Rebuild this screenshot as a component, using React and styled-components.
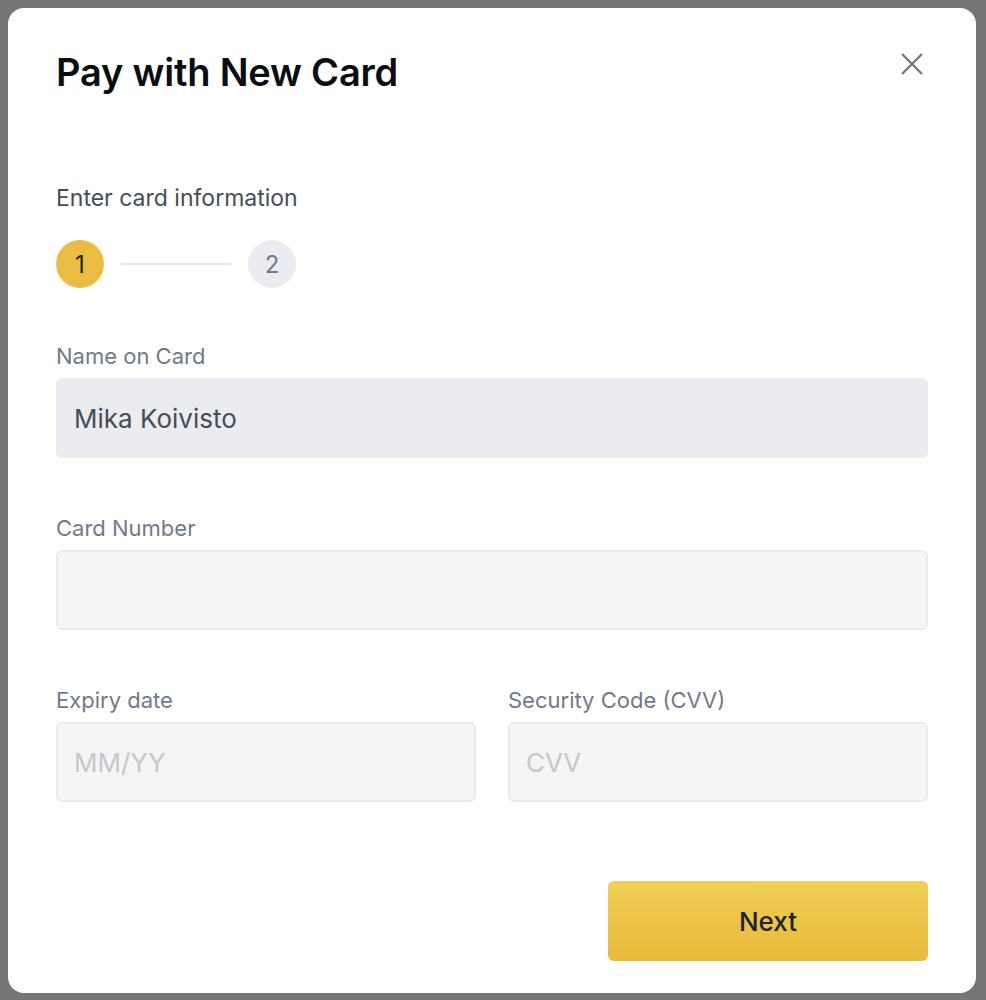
import styled, { createGlobalStyle } from "styled-components";

const GlobalStyle = createGlobalStyle`
	body {
		margin: 0;
		background: #767676;
		font-family: "Inter", "Roboto", sans-serif;
	}
`;

const Backdrop = styled.div`
	width: 986px;
	height: 1000px;
	padding: 8px 10px 7px 8px;
	box-sizing: border-box;
	background: #767676;
`;

const Modal = styled.div`
	height: 100%;
	background: #fff;
	border-radius: 16px;
	padding: 42px 48px 32px 48px;
	box-sizing: border-box;
	display: flex;
	flex-direction: column;
`;

const Header = styled.div`
	display: flex;
	justify-content: space-between;
	align-items: flex-start;
`;

const Title = styled.h1`
	margin: 0;
	font-size: 38px;
	line-height: 44px;
	font-weight: 600;
	color: #0b0e11;
	letter-spacing: -0.2px;
`;

const Close = styled.button`
	border: none;
	background: none;
	padding: 0;
	margin-top: 2px;
	margin-right: 4px;
	cursor: pointer;
	display: flex;
`;

const Subtitle = styled.div`
	margin-top: 90px;
	font-size: 23px;
	line-height: 28px;
	color: #474d57;
`;

const Steps = styled.div`
	margin-top: 28px;
	display: flex;
	align-items: center;
	gap: 17px;
`;

const Step = styled.div`
	width: 48px;
	height: 48px;
	border-radius: 50%;
	display: flex;
	align-items: center;
	justify-content: center;
	font-size: 24px;
	background: ${(p) => (p.$active ? "#ebbd42" : "#eaecef")};
	color: ${(p) => (p.$active ? "#1e2329" : "#707a8a")};
`;

const StepLine = styled.div`
	width: 110px;
	height: 2px;
	background: #e6e8ea;
`;

const Field = styled.div`
	display: flex;
	flex-direction: column;
	gap: 8px;
	margin-top: ${(p) => p.$top || "56px"};
`;

const Label = styled.div`
	font-size: 22px;
	line-height: 28px;
	color: #707a8a;
`;

const Input = styled.div`
	height: 80px;
	box-sizing: border-box;
	border-radius: 6px;
	padding: 0 16px;
	display: flex;
	align-items: center;
	font-size: 26px;
	background: ${(p) => (p.$filled ? "#eaecef" : "#f5f5f5")};
	border: 2px solid ${(p) => (p.$filled ? "#eaecef" : "#ebebeb")};
	color: ${(p) => (p.$filled ? "#474d57" : "#c4c7cc")};
`;

const Row = styled.div`
	display: grid;
	grid-template-columns: 420px 1fr;
	gap: 32px;
`;

const Footer = styled.div`
	margin-top: auto;
	display: flex;
	justify-content: flex-end;
`;

const NextButton = styled.button`
	width: 320px;
	height: 80px;
	border: none;
	border-radius: 6px;
	background: linear-gradient(180deg, #f0cf55 0%, #e9b93b 100%);
	font-family: inherit;
	font-size: 26px;
	font-weight: 500;
	color: #1e2329;
`;

const App = () =>
{
	return (
		<>
			<GlobalStyle />
			<Backdrop>
				<Modal>
					<Header>
						<Title>Pay with New Card</Title>
						<Close aria-label="Close">
							<svg width="24" height="24" viewBox="0 0 24 24">
								<path d="M2 2 L22 22 M22 2 L2 22" stroke="#707a8a" strokeWidth="2.4" fill="none" />
							</svg>
						</Close>
					</Header>
					<Subtitle>Enter card information</Subtitle>
					<Steps>
						<Step $active>1</Step>
						<StepLine />
						<Step>2</Step>
					</Steps>
					<Field $top="54px">
						<Label>Name on Card</Label>
						<Input $filled>Mika Koivisto</Input>
					</Field>
					<Field>
						<Label>Card Number</Label>
						<Input />
					</Field>
					<Row>
						<Field>
							<Label>Expiry date</Label>
							<Input>MM/YY</Input>
						</Field>
						<Field>
							<Label>Security Code (CVV)</Label>
							<Input>CVV</Input>
						</Field>
					</Row>
					<Footer>
						<NextButton>Next</NextButton>
					</Footer>
				</Modal>
			</Backdrop>
		</>
	);
};

export default App;
